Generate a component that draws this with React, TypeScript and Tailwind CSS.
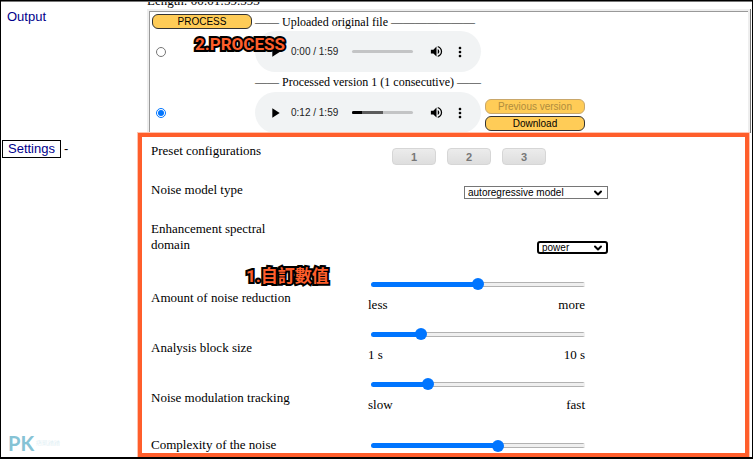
import React, { useState } from 'react';
import { ChevronDown } from 'lucide-react';
import { MdPlayArrow, MdVolumeUp, MdMoreVert } from 'react-icons/md';

export default function App() {
  const [version, setVersion] = useState('processed');

  return (
    <div className="relative flex h-screen flex-col overflow-hidden border border-b-2 border-black bg-white font-['Liberation_Serif',serif] text-[13px] leading-4 text-black">
      <div className="flex h-2 shrink-0 items-end overflow-hidden border-t border-[#777] pl-[146px]">
        <p>Length: 00:01:59.593</p>
      </div>

      {/* Output */}
      <section className="flex shrink-0">
        <h2 className="w-[146px] shrink-0 pl-1.5 font-['Liberation_Sans',sans-serif] text-[#00008b]">Output</h2>
        <div className="mr-0.5 flex-1 border-2 border-b-0 border-[#eee] shadow-[1px_0_0_#777]">
          <div className="border-l border-t border-[#999] pl-0.5">
            <div className="flex h-[19px] items-center gap-[3px] text-xs">
              <ActionButton>PROCESS</ActionButton>
              <span>—— Uploaded original file ———————</span>
            </div>
            <div className="flex items-center">
              <VersionRadio label="Uploaded original file" checked={version === 'original'} onChange={() => setVersion('original')} />
              <Player time="0:00 / 1:59" played={0} buffered={0} />
            </div>
            <div className="flex h-5 items-center pl-[103px] text-xs">—— Processed version 1 (1 consecutive) ——</div>
            <div className="flex items-center">
              <VersionRadio label="Processed version 1" checked={version === 'processed'} onChange={() => setVersion('processed')} />
              <Player time="0:12 / 1:59" played={16} buffered={50} />
              <div className="ml-1 flex flex-col gap-0.5 pt-1">
                <ActionButton disabled>Previous version</ActionButton>
                <ActionButton>Download</ActionButton>
              </div>
            </div>
          </div>
        </div>
      </section>

      {/* Settings */}
      <section className="flex min-h-0 flex-1">
        <h2 className="w-[137px] shrink-0 pl-px pt-[7px] font-['Liberation_Sans',sans-serif]">
          <button className="mr-[3px] border border-black px-[5px] text-[#00008b]">Settings</button>-
        </h2>
        <div className="relative mr-[3px] flex-1">
          <div className="pl-[13px] pt-2.5">
            <div className="flex h-[22px] w-[457px] items-end justify-between pr-[62px]">
              <span className="self-start">Preset configurations</span>
              <div className="flex gap-[11px]">
                <PresetButton>1</PresetButton>
                <PresetButton>2</PresetButton>
                <PresetButton>3</PresetButton>
              </div>
            </div>
            <SelectRow id="model" label="Noise model type" className="mt-[17px] h-[17px]" width="w-36" box="border border-[#767676]">
              autoregressive model
            </SelectRow>
            <SelectRow id="domain" label="Enhancement spectral domain" className="mt-[22px] h-[33px]" width="w-[71px]" box="rounded-[3px] border-2 border-black">
              power
            </SelectRow>
            <SliderRow id="amount" label="Amount of noise reduction" value={50} min="less" max="more" className="mt-6" />
            <SliderRow id="block" label="Analysis block size" value={22} min="1 s" max="10 s" className="mt-[15px]" />
            <SliderRow id="tracking" label="Noise modulation tracking" value={25} min="slow" max="fast" className="mt-[15px]" />
            <SliderRow id="complexity" label="Complexity of the noise model" value={60} min="low" max="high" className="mt-6" labelClass="pb-2" />
          </div>
          <div className="pointer-events-none absolute inset-0 border-4 border-[#ff5e2b] shadow-[0_0_0_1px_#ffc4b0]" />
          <Callout className="left-[108px] top-[133px]">1.自訂數值</Callout>
        </div>
      </section>

      <Callout className="left-[194px] top-[33px]">2.PROCESS</Callout>
      <div className="absolute bottom-0 left-[7px] flex items-center gap-0.5 font-['Lato',sans-serif] text-[#86c3d5]">
        <span className="text-xl font-bold">PK</span>
        <span className="text-[6px] text-[#dceef3]">痞凱踏踏</span>
      </div>
    </div>
  );
}

function ActionButton({ children, disabled }: any) {
  return (
    <button
      disabled={disabled}
      className="h-[15px] w-[100px] shrink-0 rounded-md border border-[#333] bg-[#ffcc57] font-['Liberation_Sans',sans-serif] text-[10px] leading-[13px] disabled:border-[#c9a76a] disabled:text-[#b08d3e]"
    >
      {children}
    </button>
  );
}

function VersionRadio({ label, checked, onChange }: any) {
  return (
    <div className="flex w-[103px] shrink-0 pl-1">
      <input type="radio" name="version" aria-label={label} checked={checked} onChange={onChange} className="size-2.5" />
    </div>
  );
}

function Player({ time, played, buffered }: any) {
  return (
    <div className="flex h-[41px] w-[226px] shrink-0 items-center rounded-full bg-[#f1f3f4] pl-3 pr-[13px] font-['Liberation_Sans',sans-serif] text-[10px]">
      <button aria-label="Play"><MdPlayArrow size={16} /></button>
      <span className="ml-2 w-[61px] text-[#222]">{time}</span>
      <div className="relative mr-4 h-[3px] flex-1 overflow-hidden rounded-full bg-[#c3c4c5]">
        <div className="absolute inset-y-0 left-0 bg-[#5c5c5c]" style={{ width: `${buffered}%` }} />
        <div className="absolute inset-y-0 left-0 bg-black" style={{ width: `${played}%` }} />
      </div>
      <button aria-label="Mute" className="mr-2"><MdVolumeUp size={15} /></button>
      <button aria-label="More options"><MdMoreVert size={16} /></button>
    </div>
  );
}

function PresetButton({ children }: any) {
  return (
    <button className="h-[17px] w-11 rounded border border-[#d6d6d6] bg-linear-to-b from-[#ececec] to-[#dedede] font-['Liberation_Sans',sans-serif] text-[11px] leading-3 font-bold text-[#777]">
      {children}
    </button>
  );
}

function SelectRow({ id, label, className, width, box, children }: any) {
  return (
    <div className={`flex w-[457px] items-end justify-between ${className}`}>
      <label htmlFor={id} className="w-[150px] self-start">{label}</label>
      <div className={`relative flex ${width}`}>
        <select id={id} className={`h-[13px] w-full appearance-none bg-white pl-[3px] font-['Liberation_Sans',sans-serif] text-[10px] leading-[10px] ${box}`}>
          <option>{children}</option>
        </select>
        <ChevronDown size={12} strokeWidth={4} className="pointer-events-none absolute right-1 top-px" />
      </div>
    </div>
  );
}

function SliderRow({ id, label, value, min, max, className, labelClass = 'pt-1' }: any) {
  const [current, setCurrent] = useState(value);

  return (
    <div className={`flex w-[434px] items-center justify-between ${className}`}>
      <label htmlFor={id} className={`w-[150px] ${labelClass}`}>{label}</label>
      <div className="w-[217px]">
        <div className="flex h-3 items-center pl-[3px]">
          <input
            id={id}
            type="range"
            value={current}
            onChange={(e) => setCurrent(Number(e.target.value))}
            className="h-[5px] w-full appearance-none rounded-full [&::-webkit-slider-thumb]:size-3 [&::-webkit-slider-thumb]:appearance-none [&::-webkit-slider-thumb]:rounded-full [&::-webkit-slider-thumb]:bg-[#0075ff]"
            style={{
              background: `linear-gradient(to right, #0075ff ${current}%, transparent ${current}%), linear-gradient(#b2b2b2 1px, #efefef 1px 4px, #b2b2b2 4px)`,
            }}
          />
        </div>
        <div className="mt-[7px] flex justify-between">
          <span>{min}</span>
          <span>{max}</span>
        </div>
      </div>
    </div>
  );
}

function Callout({ className, children }: any) {
  return (
    <span className={`pointer-events-none absolute whitespace-nowrap font-['Roboto','Noto_Sans_CJK_TC',sans-serif] text-[17px] leading-5 font-bold text-[#ff5e2b] [-webkit-text-stroke:4px_#000] [paint-order:stroke_fill] ${className}`}>
      {children}
    </span>
  );
}
